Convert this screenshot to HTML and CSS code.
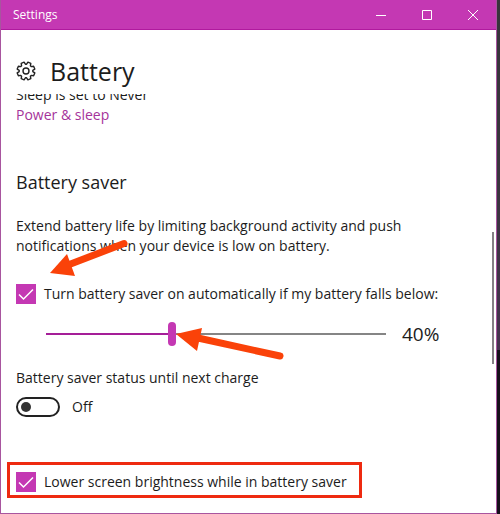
FILE: index.html
```html
<!DOCTYPE html>
<html lang="en">
<head>
<meta charset="utf-8">
<meta name="viewport" content="width=device-width, initial-scale=1">
<title>Settings</title>
<link rel="stylesheet" href="styles.css">
</head>
<body>
<div class="window">
  <header class="titlebar">
    <span class="titlebar-name">Settings</span>
    <div class="window-controls">
      <button type="button" aria-label="Minimize"><svg viewBox="0 0 12 12"><path d="M1 6.500H11"/></svg></button>
      <button type="button" aria-label="Maximize"><svg viewBox="0 0 12 12"><path d="M1.500 1.500H10.500V10.500H1.500Z"/></svg></button>
      <button type="button" aria-label="Close"><svg viewBox="0 0 12 12"><path d="M1 1L11 11M11 1L1 11"/></svg></button>
    </div>
  </header>
  <div class="page-title">
    <svg class="gear" viewBox="0 0 20 20" aria-hidden="true"><path d="M10.600 3.200 11.900 1.200 14.800 2.400 14.400 4.800 15.200 5.600 17.600 5.200 18.800 8.100 16.800 9.400V10.600L18.800 11.900 17.600 14.800 15.200 14.400 14.400 15.200 14.800 17.600 11.900 18.800 10.600 16.800H9.400L8.100 18.800 5.200 17.600 5.600 15.200 4.800 14.400 2.400 14.800 1.200 11.900 3.200 10.600V9.400L1.200 8.100 2.400 5.200 4.800 5.600 5.600 4.800 5.200 2.400 8.100 1.200 9.400 3.200Z"/><circle cx="10" cy="10" r="3"/></svg>
    <h1>Battery</h1>
  </div>
  <main class="content">
    <p class="sleep-status">Sleep is set to Never</p>
    <a class="link" href="#">Power &amp; sleep</a>
    <h2>Battery saver</h2>
    <p class="description">Extend battery life by limiting background activity and push notifications when your device is low on battery.</p>
    <div class="auto-row">
      <label class="check"><input type="checkbox" checked><svg viewBox="0 0 20 20" aria-hidden="true"><path d="M3 10.500 7.500 15 17 5.500"/></svg><span>Turn battery saver on automatically if my battery falls below:</span></label>
      <svg class="arrow arrow-check" viewBox="0 0 84 40" aria-hidden="true"><path class="shaft" d="M20 26 76 4.500"/><path class="head" d="M2 34 19 15 27 37Z"/></svg>
    </div>
    <div class="slider-row">
      <input type="range" min="5" max="100" value="40" aria-label="Battery level">
      <output>40%</output>
      <svg class="arrow arrow-slider" viewBox="0 0 112 36" aria-hidden="true"><path class="shaft" d="M22 11 104 29"/><path class="head" d="M0 7 26 1 21 24Z"/></svg>
    </div>
    <p class="status-label" id="saver-status">Battery saver status until next charge</p>
    <label class="toggle"><input type="checkbox" role="switch" aria-labelledby="saver-status"><span>Off</span></label>
    <div class="callout">
      <label class="check"><input type="checkbox" checked><svg viewBox="0 0 20 20" aria-hidden="true"><path d="M3 10.500 7.500 15 17 5.500"/></svg><span>Lower screen brightness while in battery saver</span></label>
    </div>
    <div class="scrollbar"></div>
  </main>
</div>
<div class="desktop"></div>
</body>
</html>
```
FILE: styles.css
```css
* { box-sizing: border-box; }

body {
  margin: 0;
  min-height: 100vh;
  display: flex;
  background: #fff;
  color: #1c1c1c;
  font: 14px/20px "Open Sans", "Noto Sans", sans-serif;
}

h1, h2, p { margin: 0; font-weight: 400; }

.window {
  flex: 1;
  display: flex;
  flex-direction: column;
  border: 1px solid #a8559f;
  border-top: 0;
}

.desktop {
  width: 3px;
  background: linear-gradient(#38343c 0 30%, #46334f 68%, #160f1b 68%);
}

.titlebar {
  height: 30px;
  display: flex;
  justify-content: space-between;
  align-items: center;
  padding-left: 12px;
  background: #c438b3;
  border-bottom: 1px solid #b01a9e;
  color: #fff;
  font-size: 12px;
}

.window-controls { display: flex; height: 100%; }

.window-controls button {
  width: 46px;
  display: flex;
  justify-content: center;
  align-items: center;
  padding: 0;
  border: 0;
  background: none;
}

.window-controls svg {
  width: 12px;
  height: 12px;
  fill: none;
  stroke: #fff;
}

.page-title {
  height: 64px;
  display: flex;
  align-items: center;
  gap: 14px;
  padding: 18px 15px 0;
}

.gear {
  width: 20px;
  height: 20px;
  fill: none;
  stroke: #222;
  stroke-width: 1.4;
  stroke-linejoin: round;
}

h1 {
  font-size: 25px;
  line-height: 36px;
}

.content {
  position: relative;
  flex: 1;
  overflow: hidden;
  padding: 0 44px 15px 15px;
}

.sleep-status { margin-top: -9px; }

.link {
  display: block;
  color: #a5339a;
  text-decoration: none;
}

h2 {
  margin-top: 45px;
  font-size: 18px;
  line-height: 24px;
}

.description { margin-top: 22px; }

.auto-row { position: relative; margin-top: 28px; }

.check {
  position: relative;
  display: flex;
  align-items: center;
  gap: 8px;
  white-space: nowrap;
}

.check input {
  appearance: none;
  width: 20px;
  height: 20px;
  margin: 0;
  background: #c438b3;
}

.check svg {
  position: absolute;
  left: 0;
  top: 0;
  width: 20px;
  height: 20px;
  fill: none;
  stroke: #fff;
  stroke-width: 1.5;
  pointer-events: none;
}

.check input:not(:checked) + svg { display: none; }

.slider-row {
  position: relative;
  display: flex;
  align-items: center;
  gap: 16px;
  height: 32px;
  margin-top: 14px;
  padding-left: 30px;
}

.slider-row input {
  appearance: none;
  flex: 1;
  min-width: 0;
  height: 24px;
  margin: 0;
  background: linear-gradient(90deg, #a51e98 37%, #858585 37%) center / 100% 2px no-repeat;
}

.slider-row input::-webkit-slider-thumb {
  appearance: none;
  width: 8px;
  height: 24px;
  border-radius: 4px;
  background: #c438b3;
}

.slider-row output {
  width: 50px;
  font-size: 19px;
  line-height: 24px;
}

.arrow {
  position: absolute;
  overflow: visible;
  pointer-events: none;
}

.arrow-check { left: 32px; top: -45px; width: 84px; height: 40px; }
.arrow-slider { left: 160px; top: 9px; width: 112px; height: 36px; }

.shaft {
  stroke: #fa4209;
  stroke-width: 7;
  stroke-linecap: round;
}

.head { fill: #fa4209; }

.status-label { margin-top: 18px; }

.toggle {
  display: flex;
  align-items: center;
  gap: 12px;
  margin-top: 9px;
}

.toggle input {
  appearance: none;
  width: 44px;
  height: 20px;
  margin: 0;
  padding: 3px;
  border: 2px solid #222;
  border-radius: 10px;
}

.toggle input::before {
  content: "";
  display: block;
  width: 10px;
  height: 10px;
  border-radius: 50%;
  background: #333;
}

.toggle input:checked::before { margin-left: auto; }

.callout {
  width: fit-content;
  margin: 45px 0 0 -9px;
  padding: 7px 12px 3px 6px;
  border: 3px solid #ee2a10;
}

.scrollbar {
  position: absolute;
  right: 2px;
  top: 138px;
  width: 2px;
  height: 132px;
  background: #858085;
}
```
